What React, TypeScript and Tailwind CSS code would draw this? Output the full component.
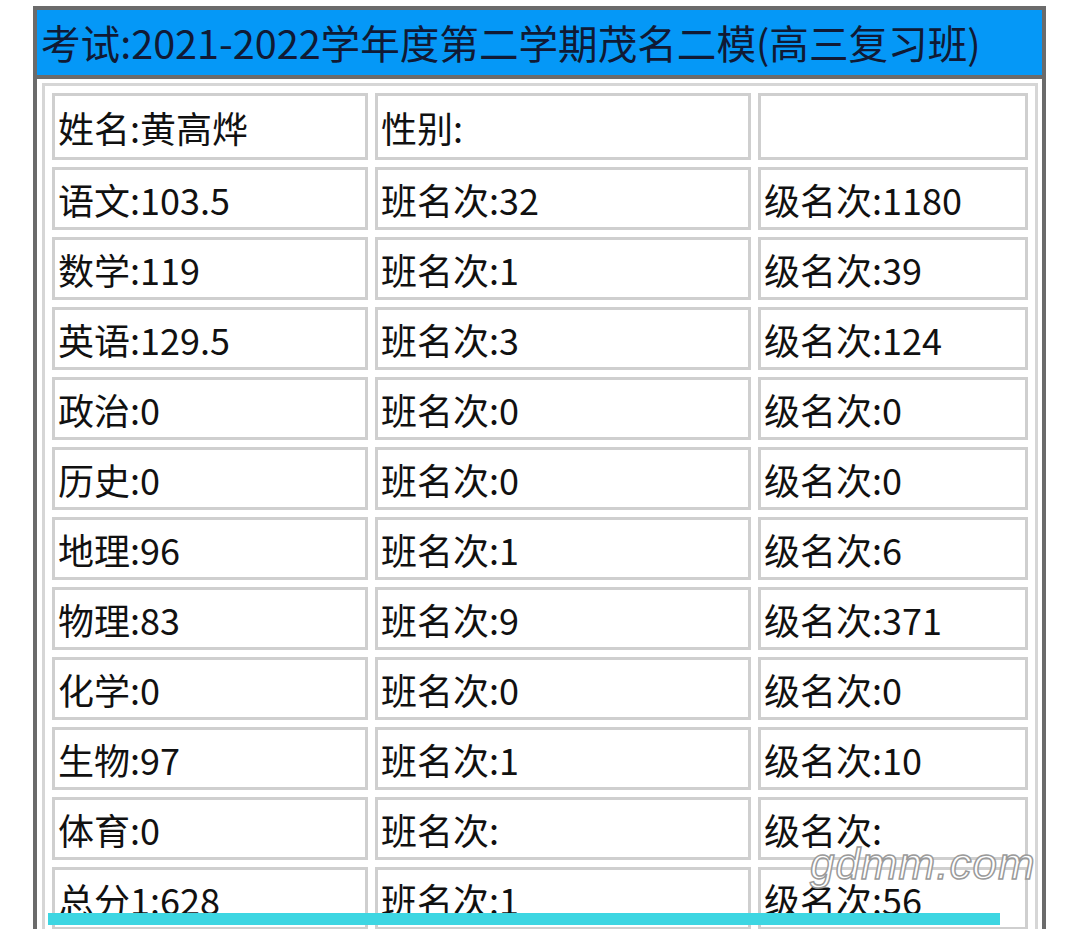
const rows: [string, string, string][] = [
  ["姓名:黄高烨", "性别:", ""],
  ["语文:103.5", "班名次:32", "级名次:1180"],
  ["数学:119", "班名次:1", "级名次:39"],
  ["英语:129.5", "班名次:3", "级名次:124"],
  ["政治:0", "班名次:0", "级名次:0"],
  ["历史:0", "班名次:0", "级名次:0"],
  ["地理:96", "班名次:1", "级名次:6"],
  ["物理:83", "班名次:9", "级名次:371"],
  ["化学:0", "班名次:0", "级名次:0"],
  ["生物:97", "班名次:1", "级名次:10"],
  ["体育:0", "班名次:", "级名次:"],
  ["总分1:628", "班名次:1", "级名次:56"],
];

const font = { fontFamily: '"Noto Sans CJK SC", "Noto Sans", sans-serif' };

export default function App() {
  return (
    <div className="relative w-[1080px] h-[929px] overflow-hidden bg-white" style={font}>
      <div className="ml-[33px] mt-[6px] w-[1013px] border-x-4 border-t-4 border-[#6b6b6b]">
        <div className="h-[69px] bg-[#0598f7] border-b-4 border-[#6b6b6b] pl-[4px] pb-[2px] flex items-center text-[39.6px] text-[#101a35] leading-none whitespace-nowrap">
          考试:2021-2022学年度第二学期茂名二模(高三复习班)
        </div>
        <div className="mt-[4px] ml-[5px] w-[996px] border-[3px] border-[#d6d6d6] p-[7px] flex flex-col gap-[7px]">
          {rows.map((r, i) => (
            <div key={i} className="grid grid-cols-[316px_376px_270px] gap-[7px]">
              {r.map((c, j) => (
                <div
                  key={j}
                  className={`${i === 0 ? "h-[67px]" : "h-[63px]"} border-[3px] border-[#cfcfcf] pl-[3px] flex items-center text-[36px] text-[#111] leading-none whitespace-nowrap`}
                >
                  {c}
                </div>
              ))}
            </div>
          ))}
        </div>
      </div>

      <div
        className="absolute left-[810px] top-[842px] text-[44px] italic leading-none text-white [-webkit-text-stroke:1.5px_#9a9a9a] tracking-[1px]"
        style={{ fontFamily: '"Liberation Sans", sans-serif' }}
      >
        gdmm.com
      </div>
      <div className="absolute left-[48px] top-[913px] w-[952px] h-[12px] bg-[#3dd6e2]" />
    </div>
  );
}
